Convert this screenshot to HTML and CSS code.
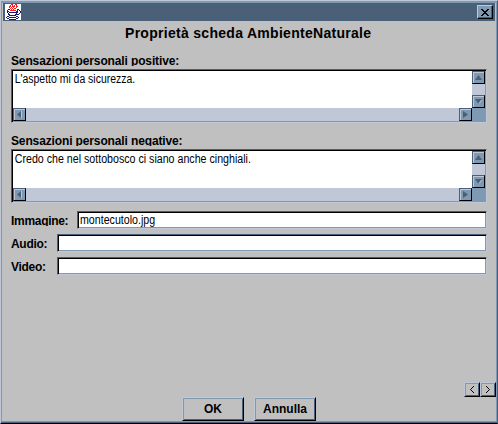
FILE: index.html
```html
<!DOCTYPE html>
<html lang="it">
<head>
<meta charset="utf-8">
<title>Proprietà scheda</title>
<link rel="stylesheet" href="styles.css">
</head>
<body>
<div class="window">
  <header class="titlebar">
    <svg class="java" width="16" height="16" viewBox="0 0 16 16" shape-rendering="crispEdges">
      <rect width="16" height="16" fill="#fff"/>
      <path d="M6 .5h2M10 .5h2M5 1.500h1M7 1.500h1M9 1.500h1M11 1.500h1M4 2.500h2M7 2.500h3M11 2.500h2M4 3.500h1M6 3.500h1M8 3.500h1M11 3.500h1M5 4.500h1M7 4.500h1M9 4.500h2M6 5.500h1M8 5.500h1M5 6.500h6" fill="none" stroke="#f02020"/>
      <path d="M3 5.500h2M12 5.500h2M2 6.500h1M12 6.500h1M14 6.500h1M2 7.500h2M11 7.500h2M15 7.500h1M2 8.500h1M4 8.500h8M12 8.500h1M15 8.500h1M3 9.500h1M11 9.500h1M14 9.500h1M3 10.500h2M10 10.500h4M4 11.500h7M2 12.500h2M11 12.500h2M1 13.500h1M4 13.500h7M13 13.500h1M2 14.500h2M11 14.500h2M4 15.500h7" fill="none" stroke="#18187c"/>
    </svg>
    <button class="close" aria-label="Chiudi"><svg width="8" height="7" viewBox="0 0 8 7" shape-rendering="crispEdges"><path d="M0 .5h2M6 .5h2M1 1.500h2M5 1.500h2M2 2.500h4M3 3.500h2M2 4.500h4M1 5.500h2M5 5.500h2M0 6.500h2M6 6.500h2" stroke="#000"/></svg></button>
  </header>
  <main class="content">
    <h1>Proprietà scheda AmbienteNaturale</h1>
    <div class="label pos">Sensazioni personali positive:</div>
    <div class="area">
      <div class="text t1">L'aspetto mi da sicurezza.</div>
      <div class="vbar">
        <span class="arrow"><svg width="7" height="5"><path d="M0 5L3.500 0L7 5z"/></svg></span>
        <span class="arrow down"><svg width="7" height="5"><path d="M0 0L3.500 5L7 0z"/><path class="lit" d="M4 4.500L6.500 1"/></svg></span>
      </div>
      <div class="hbar">
        <span class="arrow"><svg width="5" height="7"><path d="M4 0L0 3.500L4 7z"/><path class="lit" d="M4.500 0v7"/></svg></span>
        <span class="arrow"><svg width="5" height="7"><path d="M0 0L5 3.500L0 7z"/></svg></span>
      </div>
    </div>
    <div class="label neg">Sensazioni personali negative:</div>
    <div class="area">
      <div class="text t2">Credo che nel sottobosco ci siano anche cinghiali.</div>
      <div class="vbar">
        <span class="arrow"><svg width="7" height="5"><path d="M0 5L3.500 0L7 5z"/></svg></span>
        <span class="arrow down"><svg width="7" height="5"><path d="M0 0L3.500 5L7 0z"/><path class="lit" d="M4 4.500L6.500 1"/></svg></span>
      </div>
      <div class="hbar">
        <span class="arrow"><svg width="5" height="7"><path d="M4 0L0 3.500L4 7z"/><path class="lit" d="M4.500 0v7"/></svg></span>
        <span class="arrow"><svg width="5" height="7"><path d="M0 0L5 3.500L0 7z"/></svg></span>
      </div>
    </div>
    <div class="fields">
      <div class="row wide"><span class="label img">Immagine:</span><div class="field"><div class="value">montecutolo.jpg</div></div></div>
      <div class="row"><span class="label aud">Audio:</span><div class="field"></div></div>
      <div class="row"><span class="label vid">Video:</span><div class="field"></div></div>
    </div>
    <nav class="pager">
      <button aria-label="Indietro"><svg width="4" height="7" viewBox="0 0 4 7"><path d="M4 0L.5 3.500L4 7"/></svg></button>
      <button aria-label="Avanti"><svg width="4" height="7" viewBox="0 0 4 7"><path d="M0 0L3.500 3.500L0 7"/></svg></button>
    </nav>
    <div class="actions"><button class="ok">OK</button><button class="cancel">Annulla</button></div>
  </main>
</div>
</body>
</html>
```
FILE: styles.css
```css
* { box-sizing: border-box; }
html, body { margin: 0; height: 100%; overflow: hidden; }
body { font: 12px/14px "Liberation Sans", Arial, sans-serif; color: #000; }
svg { display: block; }
.window { width: 498px; height: 424px; background: #c0c0c0; border: 1px solid; border-color: #c0c8d8 #4a6078 #000 #c0c8d8; box-shadow: inset 0 -1px #4a6078, inset 1px 2px #8099b3, inset -1px -2px #8099b3; padding: 2px; }
.titlebar { height: 18px; background: #4a6078; display: flex; align-items: flex-start; justify-content: space-between; padding: 1px 2px 0 2px; }
button { font: inherit; color: #000; background: #c0c0c0; border-radius: 0; padding: 0; display: flex; align-items: center; justify-content: center; border: 1px solid; border-color: #c0c8d8 #000 #000 #c0c8d8; box-shadow: inset 1px 1px #8099b3, inset -1px -1px #4a6078; }
.close { width: 16px; height: 14px; margin-top: 1px; background: #8099b3; box-shadow: inset -1px -1px #4a6078; }
.content { display: flex; flex-direction: column; height: 400px; padding-left: 8px; }
h1 { margin: 3px 0 0; padding-left: 114px; font-size: 14px; line-height: 18px; font-weight: bold; letter-spacing: .29px; white-space: nowrap; height: 19px; }
.label { font-weight: bold; letter-spacing: -.13px; white-space: nowrap; overflow: hidden; flex: none; }
.pos, .neg { margin: 11px 0 3px; height: 12px; }
.area, .field { background: #fff; border: 1px solid; border-color: #4a6078 #c0c8d8 #c0c8d8 #4a6078; box-shadow: inset 1px 1px #000, inset -1px -1px #8099b3; }
.area { width: 476px; height: 54px; flex: none; padding: 1px; display: grid; grid-template: 37px 13px / 459px 13px; }
.text, .value { white-space: nowrap; transform-origin: 0 0; transform: scaleX(.887); }
.text { padding: 1px 0 0 2px; }
.t1 { transform: scaleX(.87); }
.vbar, .hbar { background: #c0c8d8; display: flex; justify-content: space-between; }
.vbar { flex-direction: column; }
.hbar { box-shadow: 13px 0 #8099b3; }
.arrow { width: 13px; height: 13px; background: #8099b3; border: 1px solid; border-color: #4a6078 #000 #000 #4a6078; box-shadow: inset 1px 1px #c0c8d8; display: grid; place-items: center; fill: #4a6078; }
.lit { fill: none; stroke: #c0c8d8; }
.fields { margin-top: 8px; display: flex; flex-direction: column; gap: 5px; }
.row { display: flex; height: 18px; width: 476px; }
.row .label { width: 46px; height: 15px; padding-top: 3px; letter-spacing: -.3px; }
.wide .label { width: 66px; }
.field { flex: 1; padding: 1px 0 0 2px; }
.pager { display: flex; justify-content: flex-end; margin: 107px -1px 0 0; }
.pager button { width: 16px; height: 15px; }
.pager svg { fill: none; stroke: #000; }
.actions { display: flex; gap: 10px; margin: 0 0 0 171px; }
.actions button { width: 62px; height: 24px; font-weight: bold; }
```
